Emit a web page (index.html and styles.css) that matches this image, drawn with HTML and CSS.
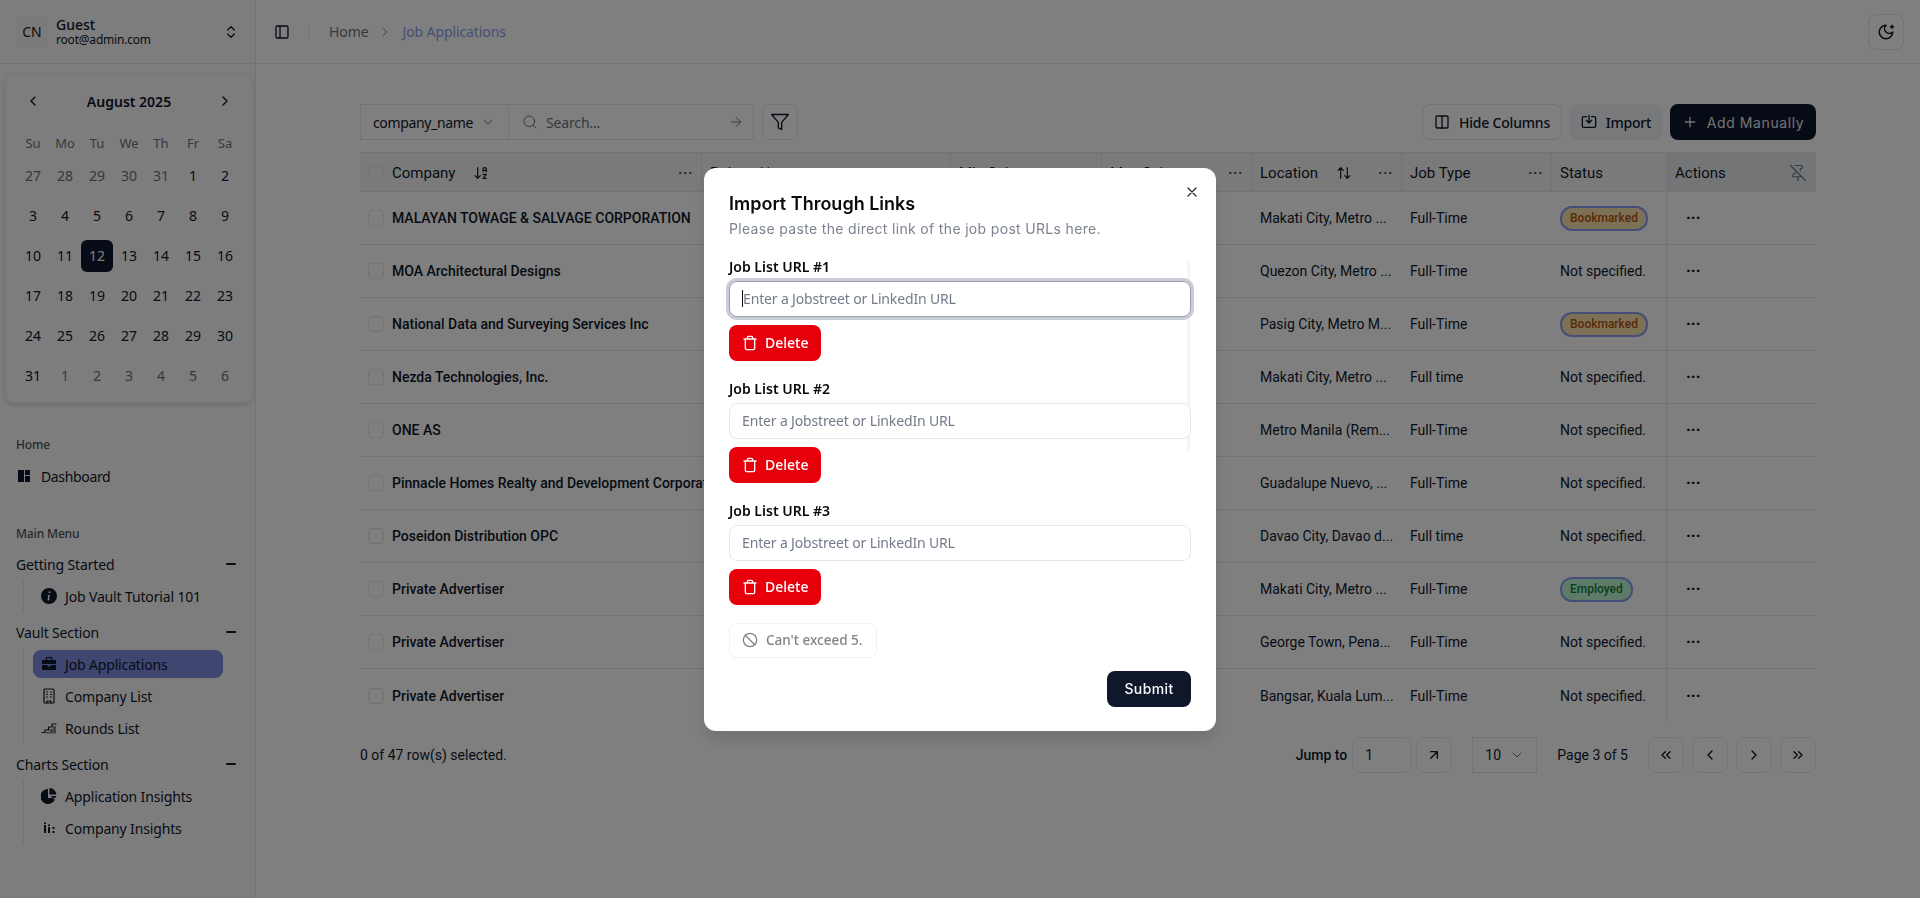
FILE: index.html
```html
<!DOCTYPE html>
<html lang="en">
<head>
    <meta charset="UTF-8">
    <meta name="viewport" content="width=device-width, initial-scale=1.0">
    <title>Job Applications</title>
    <link rel="stylesheet" href="styles.css">
</head>
<body>
    <div class="app">
        <!-- Sidebar -->
        <aside class="sidebar">
            <div class="user-box">
                <div class="avatar">CN</div>
                <div class="user-text">
                    <div class="user-name">Guest</div>
                    <div class="user-mail">root@admin.com</div>
                </div>
                <svg class="ico-16" viewBox="0 0 24 24"><path d="m7 15 5 5 5-5M7 9l5-5 5 5"/></svg>
            </div>

            <div class="calendar">
                <div class="cal-head">
                    <svg class="ico-16" viewBox="0 0 24 24"><path d="m15 18-6-6 6-6"/></svg>
                    <span>August 2025</span>
                    <svg class="ico-16" viewBox="0 0 24 24"><path d="m9 18 6-6-6-6"/></svg>
                </div>
                <div class="cal-grid">
                    <span class="dow">Su</span><span class="dow">Mo</span><span class="dow">Tu</span><span class="dow">We</span><span class="dow">Th</span><span class="dow">Fr</span><span class="dow">Sa</span>
                    <span class="day muted">27</span><span class="day muted">28</span><span class="day muted">29</span><span class="day muted">30</span><span class="day muted">31</span><span class="day">1</span><span class="day">2</span>
                    <span class="day">3</span><span class="day">4</span><span class="day">5</span><span class="day">6</span><span class="day">7</span><span class="day">8</span><span class="day">9</span>
                    <span class="day">10</span><span class="day">11</span><span class="day selected">12</span><span class="day">13</span><span class="day">14</span><span class="day">15</span><span class="day">16</span>
                    <span class="day">17</span><span class="day">18</span><span class="day">19</span><span class="day">20</span><span class="day">21</span><span class="day">22</span><span class="day">23</span>
                    <span class="day">24</span><span class="day">25</span><span class="day">26</span><span class="day">27</span><span class="day">28</span><span class="day">29</span><span class="day">30</span>
                    <span class="day">31</span><span class="day muted">1</span><span class="day muted">2</span><span class="day muted">3</span><span class="day muted">4</span><span class="day muted">5</span><span class="day muted">6</span>
                </div>
            </div>

            <nav class="nav">
                <div class="nav-label">Home</div>
                <a class="nav-top">
                    <svg class="ico-fill" viewBox="0 0 14 14"><path d="M1 1h6v12H1zM8 1h5v5H8zM8 7h5v6H8z"/></svg>
                    Dashboard
                </a>

                <div class="nav-label main-menu">Main Menu</div>

                <div class="nav-group">Getting Started <span class="minus"></span></div>
                <div class="nav-sub">
                    <a class="nav-item">
                        <svg class="ico-fill" viewBox="0 0 16 16"><path fill-rule="evenodd" d="M8 0a8 8 0 1 1 0 16A8 8 0 0 1 8 0zm.6 3.2a1 1 0 1 0 0 2 1 1 0 0 0 0-2zM6.6 6.7l-.1.6.5.1c.3.1.4.2.3.6l-.7 3.1c-.2.9.1 1.3.9 1.3.6 0 1.2-.2 1.5-.6l.1-.6c-.2.2-.6.3-.8.3-.3 0-.4-.2-.3-.5l.9-3.9z"/></svg>
                        Job Vault Tutorial 101
                    </a>
                </div>

                <div class="nav-group">Vault Section <span class="minus"></span></div>
                <div class="nav-sub">
                    <a class="nav-item active">
                        <svg class="ico-fill" viewBox="0 0 16 16"><path d="M5.5 1h5l.8.8V4H15v4H1V4h3.7V1.8zM6 2.3V4h4V2.3zM1 9h5.5v1.5h3V9H15v5H1z"/></svg>
                        Job Applications
                    </a>
                    <a class="nav-item">
                        <svg class="ico-16 thin" viewBox="0 0 16 16"><rect x="3" y="1" width="10" height="14" rx="1"/><path d="M6 13v2M10 13v2M6 13h4M5.5 4h1M9.5 4h1M5.5 6.5h1M9.5 6.5h1M5.5 9h1M9.5 9h1"/></svg>
                        Company List
                    </a>
                    <a class="nav-item">
                        <svg class="ico-16 thin" viewBox="0 0 16 16"><path d="M1 12.5h3V10h3.5V7H11V4h4"/><path class="step-fill" d="M5 13.5h10V6h-3v3H8.5v3H5z"/></svg>
                        Rounds List
                    </a>
                </div>

                <div class="nav-group">Charts Section <span class="minus"></span></div>
                <div class="nav-sub">
                    <a class="nav-item">
                        <svg class="ico-fill" viewBox="0 0 16 16"><path d="M7 1a7.5 7.5 0 1 0 7.3 9H7zM8.5 0v6.5h7A7.5 7.5 0 0 0 8.5 0zM9.5 8h5.8l-2 3.5z"/></svg>
                        Application Insights
                    </a>
                    <a class="nav-item">
                        <svg class="ico-fill" viewBox="0 0 16 16"><path d="M3 5h2v8H3zM3 2.5h2V4H3zM7 7h2v6H7zM7 4.5h2V6H7zM11.5 7h2v2h-2zM11.5 11h2v2h-2z"/></svg>
                        Company Insights
                    </a>
                </div>
            </nav>
        </aside>

        <!-- Main content -->
        <div class="main">
            <header class="topbar">
                <svg class="ico-16 toggle" viewBox="0 0 24 24"><rect x="3" y="3" width="18" height="18" rx="2"/><path d="M9 3v18"/></svg>
                <span class="topbar-sep"></span>
                <span class="crumb">Home</span>
                <svg class="ico-16 crumb-arrow" viewBox="0 0 24 24"><path d="m9 18 6-6-6-6"/></svg>
                <span class="crumb current">Job Applications</span>
                <button class="theme-btn">
                    <svg class="ico-16" viewBox="0 0 24 24"><path d="M12 3a6 6 0 0 0 9 9 9 9 0 1 1-9-9Z"/><path d="M20 3v4M22 5h-4"/></svg>
                </button>
            </header>

            <section class="content">
                <div class="toolbar">
                    <div class="search-group">
                        <div class="column-select">company_name
                            <svg class="ico-16 faint" viewBox="0 0 24 24"><path d="m6 9 6 6 6-6"/></svg>
                        </div>
                        <div class="search-box">
                            <svg class="ico-16 faint" viewBox="0 0 24 24"><circle cx="11" cy="11" r="8"/><path d="m21 21-4.3-4.3"/></svg>
                            <span class="search-text">Search...</span>
                            <svg class="ico-16 faint" viewBox="0 0 24 24"><path d="M5 12h14M12 5l7 7-7 7"/></svg>
                        </div>
                    </div>
                    <button class="btn-outline square">
                        <svg class="ico-16 big" viewBox="0 0 24 24"><path d="M22 3H2l8 9.46V19l4 2v-8.54L22 3z"/></svg>
                    </button>
                    <div class="toolbar-right">
                        <button class="btn-outline">
                            <svg class="ico-16" viewBox="0 0 24 24"><rect x="3" y="3" width="18" height="18" rx="2"/><path d="M12 3v18"/></svg>
                            Hide Columns
                        </button>
                        <button class="btn-soft">
                            <svg class="ico-16" viewBox="0 0 24 24"><path d="M8 4H4a2 2 0 0 0-2 2v12a2 2 0 0 0 2 2h16a2 2 0 0 0 2-2V6a2 2 0 0 0-2-2h-4"/><path d="M12 2v11M8 9.5l4 4 4-4"/></svg>
                            Import
                        </button>
                        <button class="btn-dark">
                            <svg class="ico-16" viewBox="0 0 24 24"><path d="M5 12h14M12 5v14"/></svg>
                            Add Manually
                        </button>
                    </div>
                </div>

                <div class="table">
                    <div class="row head">
                        <div class="cell c1"><span class="check"></span>Company
                            <svg class="ico-16 sort-icon" viewBox="0 0 24 24"><path d="m3 16 4 4 4-4M7 20V4M20 8h-5M15 10V6.5a2.5 2.5 0 0 1 5 0V10M15 14h5l-5 6h5"/></svg>
                            <span class="dots">···</span></div>
                        <div class="cell c2">Role
                            <svg class="ico-16 sort-icon" viewBox="0 0 24 24"><path d="m21 16-4 4-4-4M17 20V4M3 8l4-4 4 4M7 4v16"/></svg>
                            <span class="dots">···</span></div>
                        <div class="cell c3">Min Salary<span class="dots">···</span></div>
                        <div class="cell c4">Max Salary<span class="dots">···</span></div>
                        <div class="cell c5">Location
                            <svg class="ico-16 sort-icon" viewBox="0 0 24 24"><path d="m21 16-4 4-4-4M17 20V4M3 8l4-4 4 4M7 4v16"/></svg>
                            <span class="dots">···</span></div>
                        <div class="cell c6">Job Type<span class="dots">···</span></div>
                        <div class="cell c7">Status</div>
                        <div class="cell c8">Actions
                            <svg class="ico-16 pin" viewBox="0 0 24 24"><path d="M12 17v5M15 9.34V6h1a2 2 0 0 0 0-4H7.89M2 2l20 20M9 9v1.76a2 2 0 0 1-1.11 1.79l-1.78.9A2 2 0 0 0 5 15.24V17h12"/></svg>
                        </div>
                    </div>

                    <div class="row">
                        <div class="cell c1 name"><span class="check"></span>MALAYAN TOWAGE &amp; SALVAGE CORPORATION</div>
                        <div class="cell c2"></div><div class="cell c3"></div><div class="cell c4"></div>
                        <div class="cell c5">Makati City, Metro ...</div>
                        <div class="cell c6">Full-Time</div>
                        <div class="cell c7"><span class="badge amber">Bookmarked</span></div>
                        <div class="cell c8"><span class="more">···</span></div>
                    </div>
                    <div class="row">
                        <div class="cell c1 name"><span class="check"></span>MOA Architectural Designs</div>
                        <div class="cell c2"></div><div class="cell c3"></div><div class="cell c4"></div>
                        <div class="cell c5">Quezon City, Metro ...</div>
                        <div class="cell c6">Full-Time</div>
                        <div class="cell c7">Not specified.</div>
                        <div class="cell c8"><span class="more">···</span></div>
                    </div>
                    <div class="row">
                        <div class="cell c1 name"><span class="check"></span>National Data and Surveying Services Inc</div>
                        <div class="cell c2"></div><div class="cell c3"></div><div class="cell c4"></div>
                        <div class="cell c5">Pasig City, Metro M...</div>
                        <div class="cell c6">Full-Time</div>
                        <div class="cell c7"><span class="badge amber">Bookmarked</span></div>
                        <div class="cell c8"><span class="more">···</span></div>
                    </div>
                    <div class="row">
                        <div class="cell c1 name"><span class="check"></span>Nezda Technologies, Inc.</div>
                        <div class="cell c2"></div><div class="cell c3"></div><div class="cell c4"></div>
                        <div class="cell c5">Makati City, Metro ...</div>
                        <div class="cell c6">Full time</div>
                        <div class="cell c7">Not specified.</div>
                        <div class="cell c8"><span class="more">···</span></div>
                    </div>
                    <div class="row">
                        <div class="cell c1 name"><span class="check"></span>ONE AS</div>
                        <div class="cell c2"></div><div class="cell c3"></div><div class="cell c4"></div>
                        <div class="cell c5">Metro Manila (Rem...</div>
                        <div class="cell c6">Full-Time</div>
                        <div class="cell c7">Not specified.</div>
                        <div class="cell c8"><span class="more">···</span></div>
                    </div>
                    <div class="row">
                        <div class="cell c1 name"><span class="check"></span>Pinnacle Homes Realty and Development Corporation</div>
                        <div class="cell c2"></div><div class="cell c3"></div><div class="cell c4"></div>
                        <div class="cell c5">Guadalupe Nuevo, ...</div>
                        <div class="cell c6">Full-Time</div>
                        <div class="cell c7">Not specified.</div>
                        <div class="cell c8"><span class="more">···</span></div>
                    </div>
                    <div class="row">
                        <div class="cell c1 name"><span class="check"></span>Poseidon Distribution OPC</div>
                        <div class="cell c2"></div><div class="cell c3"></div><div class="cell c4"></div>
                        <div class="cell c5">Davao City, Davao d...</div>
                        <div class="cell c6">Full time</div>
                        <div class="cell c7">Not specified.</div>
                        <div class="cell c8"><span class="more">···</span></div>
                    </div>
                    <div class="row">
                        <div class="cell c1 name"><span class="check"></span>Private Advertiser</div>
                        <div class="cell c2"></div><div class="cell c3"></div><div class="cell c4"></div>
                        <div class="cell c5">Makati City, Metro ...</div>
                        <div class="cell c6">Full-Time</div>
                        <div class="cell c7"><span class="badge green">Employed</span></div>
                        <div class="cell c8"><span class="more">···</span></div>
                    </div>
                    <div class="row">
                        <div class="cell c1 name"><span class="check"></span>Private Advertiser</div>
                        <div class="cell c2"></div><div class="cell c3"></div><div class="cell c4"></div>
                        <div class="cell c5">George Town, Pena...</div>
                        <div class="cell c6">Full-Time</div>
                        <div class="cell c7">Not specified.</div>
                        <div class="cell c8"><span class="more">···</span></div>
                    </div>
                    <div class="row last">
                        <div class="cell c1 name"><span class="check"></span>Private Advertiser</div>
                        <div class="cell c2"></div><div class="cell c3"></div><div class="cell c4"></div>
                        <div class="cell c5">Bangsar, Kuala Lum...</div>
                        <div class="cell c6">Full-Time</div>
                        <div class="cell c7">Not specified.</div>
                        <div class="cell c8"><span class="more">···</span></div>
                    </div>
                </div>

                <div class="table-foot">
                    <span class="selected-count">0 of 47 row(s) selected.</span>
                    <span class="jump-label">Jump to</span>
                    <div class="jump-input">1</div>
                    <button class="page-btn jump-go"><svg class="ico-16" viewBox="0 0 24 24"><path d="M7 7h10v10M7 17 17 7"/></svg></button>
                    <div class="size-select">10 <svg class="ico-16 faint" viewBox="0 0 24 24"><path d="m6 9 6 6 6-6"/></svg></div>
                    <span class="page-text">Page 3 of 5</span>
                    <button class="page-btn"><svg class="ico-16" viewBox="0 0 24 24"><path d="m11 17-5-5 5-5M18 17l-5-5 5-5"/></svg></button>
                    <button class="page-btn"><svg class="ico-16" viewBox="0 0 24 24"><path d="m15 18-6-6 6-6"/></svg></button>
                    <button class="page-btn"><svg class="ico-16" viewBox="0 0 24 24"><path d="m9 18 6-6-6-6"/></svg></button>
                    <button class="page-btn"><svg class="ico-16" viewBox="0 0 24 24"><path d="m6 17 5-5-5-5M13 17l5-5-5-5"/></svg></button>
                </div>
            </section>
        </div>
    </div>

    <!-- Import dialog -->
    <div class="overlay">
        <div class="modal">
            <button class="modal-close"><svg class="ico-16" viewBox="0 0 24 24"><path d="M18 6 6 18M6 6l12 12"/></svg></button>
            <h2 class="modal-title">Import Through Links</h2>
            <p class="modal-sub">Please paste the direct link of the job post URLs here.</p>

            <div class="url-list">
                <div class="url-item">
                    <label class="url-label">Job List URL #1</label>
                    <div class="url-input focused"><span class="caret"></span>Enter a Jobstreet or LinkedIn URL</div>
                    <button class="btn-delete">
                        <svg class="ico-16" viewBox="0 0 24 24"><path d="M3 6h18M19 6v14a2 2 0 0 1-2 2H7a2 2 0 0 1-2-2V6M8 6V4a2 2 0 0 1 2-2h4a2 2 0 0 1 2 2v2"/></svg>
                        Delete
                    </button>
                </div>
                <div class="url-item">
                    <label class="url-label">Job List URL #2</label>
                    <div class="url-input">Enter a Jobstreet or LinkedIn URL</div>
                    <button class="btn-delete">
                        <svg class="ico-16" viewBox="0 0 24 24"><path d="M3 6h18M19 6v14a2 2 0 0 1-2 2H7a2 2 0 0 1-2-2V6M8 6V4a2 2 0 0 1 2-2h4a2 2 0 0 1 2 2v2"/></svg>
                        Delete
                    </button>
                </div>
                <div class="url-item">
                    <label class="url-label">Job List URL #3</label>
                    <div class="url-input">Enter a Jobstreet or LinkedIn URL</div>
                    <button class="btn-delete">
                        <svg class="ico-16" viewBox="0 0 24 24"><path d="M3 6h18M19 6v14a2 2 0 0 1-2 2H7a2 2 0 0 1-2-2V6M8 6V4a2 2 0 0 1 2-2h4a2 2 0 0 1 2 2v2"/></svg>
                        Delete
                    </button>
                </div>
            </div>

            <button class="btn-limit">
                <svg class="ico-16" viewBox="0 0 24 24"><circle cx="12" cy="12" r="10"/><path d="m4.9 4.9 14.2 14.2"/></svg>
                Can't exceed 5.
            </button>

            <div class="modal-foot">
                <button class="btn-submit">Submit</button>
            </div>
        </div>
    </div>
</body>
</html>
```

FILE: styles.css
```css
:root {
    --ink: #0f172a;
    --line: #e5e7eb;
    --ui-font: "Noto Sans", "Open Sans", sans-serif;
    --table-font: Roboto, "Liberation Sans", sans-serif;
    --wide-font: Inter, "Noto Sans", sans-serif;
}

* {
    box-sizing: border-box;
}

body {
    margin: 0;
    height: 898px;
    overflow: hidden;
    background: white;
    color: var(--ink);
    font-family: var(--ui-font);
    font-size: 14px;
}

button {
    font: inherit;
    color: inherit;
    cursor: pointer;
}

.app {
    display: flex;
    height: 898px;
}

/* shared icon styles */
.ico-16 {
    width: 16px;
    height: 16px;
    flex: none;
    fill: none;
    stroke: currentColor;
    stroke-width: 2;
    stroke-linecap: round;
    stroke-linejoin: round;
}

.ico-16.thin {
    stroke-width: 1.2;
}

.ico-16.faint {
    color: #6b7280;
    stroke-width: 1.5;
}

.ico-16.big {
    width: 20px;
    height: 20px;
    stroke-width: 1.6;
}

.ico-fill {
    width: 16px;
    height: 16px;
    flex: none;
    fill: var(--ink);
}

.step-fill {
    fill: #8d8d8d;
    stroke: none;
}

/* Sidebar */
.sidebar {
    width: 256px;
    flex: none;
    background: #fafafa;
    border-right: 1px solid var(--line);
}

.user-box {
    height: 64px;
    display: flex;
    align-items: center;
    padding: 0 16px;
    border-bottom: 1px solid var(--line);
}

.avatar {
    width: 32px;
    height: 32px;
    border-radius: 8px;
    background: #f4f4f5;
    display: flex;
    align-items: center;
    justify-content: center;
    font-size: 14px;
    margin-right: 8px;
}

.user-text {
    flex: 1;
    line-height: 15px;
}

.user-name {
    font-size: 14px;
    font-weight: 500;
}

.user-mail {
    font-size: 12px;
    letter-spacing: -0.2px;
}

.calendar {
    width: 248px;
    height: 330px;
    margin: 9px 0 0 5px;
    padding: 11px 11px 0;
    background: #fafafa;
    border: 1px solid #eee;
    border-radius: 8px;
    box-shadow: 0 2px 4px rgba(0,0,0,0.12);
}

.cal-head {
    display: flex;
    align-items: center;
    justify-content: space-between;
    height: 32px;
    padding: 0 8px;
    font-weight: 600;
    font-size: 14px;
}

.cal-grid {
    display: grid;
    grid-template-columns: repeat(7, 32px);
    grid-template-rows: 19px repeat(6, 32px);
    row-gap: 8px;
    margin-top: 16px;
}

.dow {
    display: flex;
    align-items: center;
    justify-content: center;
    font-size: 13px;
    color: #71717a;
}

.day {
    display: flex;
    align-items: center;
    justify-content: center;
    padding-bottom: 1px;
    font-size: 14px;
    border-radius: 6px;
}

.day.muted {
    color: #71717a;
}

.day.selected {
    background: var(--ink);
    color: #f8fafc;
}

.nav {
    padding: 0 16px;
    margin-top: 34px;
    letter-spacing: -0.15px;
}

.nav-label {
    font-size: 12px;
    font-weight: 500;
    line-height: 16px;
    color: #52525b;
}

.nav-label.main-menu {
    margin-top: 34px;
}

.nav-top {
    display: flex;
    align-items: center;
    gap: 10px;
    height: 32px;
    margin-top: 7px;
    font-size: 14px;
    letter-spacing: -0.35px;
}

.nav-top .ico-fill {
    width: 14px;
    height: 14px;
    margin-left: 1px;
}

.nav-group {
    display: flex;
    align-items: center;
    justify-content: space-between;
    height: 32px;
    font-size: 14px;
}

.main-menu + .nav-group {
    margin-top: 6px;
}

.minus {
    width: 10px;
    height: 2px;
    background: var(--ink);
    margin-right: 3px;
    border-radius: 1px;
}

.nav-sub {
    margin-left: 7px;
    padding: 0 0 0 9px;
    border-left: 1px solid #e4e4e7;
    width: 191px;
    margin-bottom: 4px;
}

.nav-item {
    display: flex;
    align-items: center;
    gap: 8px;
    height: 32px;
    width: 190px;
    padding-left: 8px;
    border-radius: 8px;
    font-size: 14px;
}

.nav-item.active {
    height: 28px;
    margin: 2px 0;
    background: #7e8ce0;
}

/* Top bar */
.main {
    flex: 1;
    min-width: 0;
}

.topbar {
    height: 64px;
    display: flex;
    align-items: center;
    padding: 0 16px 0 18px;
    border-bottom: 1px solid var(--line);
}

.toggle {
    margin-right: 18px;
}

.topbar-sep {
    width: 1px;
    height: 16px;
    background: var(--line);
    margin-right: 20px;
}

.crumb {
    color: #71717a;
    font-size: 14px;
    letter-spacing: -0.1px;
}

.crumb.current {
    color: #8b9cf0;
}

.crumb-arrow {
    color: #71717a;
    margin: 0 10px;
    stroke-width: 1.5;
    width: 14px;
    height: 14px;
}

.theme-btn {
    margin-left: auto;
    width: 36px;
    height: 36px;
    border: 1px solid var(--line);
    border-radius: 8px;
    background: white;
    display: flex;
    align-items: center;
    justify-content: center;
    padding: 0;
}

.theme-btn .ico-16 {
    width: 18px;
    height: 18px;
}

/* Table area */
.content {
    padding: 40px 104px 0;
}

.toolbar {
    display: flex;
    align-items: center;
    height: 36px;
    gap: 8px;
}

.search-group {
    display: flex;
    width: 394px;
    height: 36px;
    border: 1px solid var(--line);
}

.column-select {
    width: 148px;
    display: flex;
    align-items: center;
    justify-content: space-between;
    padding: 0 12px;
    border-right: 1px solid var(--line);
    font-size: 14px;
    letter-spacing: -0.35px;
}

.search-box {
    flex: 1;
    display: flex;
    align-items: center;
    gap: 8px;
    padding: 0 9px 0 13px;
    color: #6b7280;
    letter-spacing: -0.15px;
}

.search-text {
    flex: 1;
}

.toolbar-right {
    margin-left: auto;
    display: flex;
    gap: 8px;
}

.btn-outline, .btn-soft, .btn-dark {
    height: 36px;
    border-radius: 8px;
    display: flex;
    align-items: center;
    justify-content: center;
    gap: 9px;
    padding: 0;
    font-size: 14px;
    font-weight: 500;
    letter-spacing: -0.2px;
    white-space: nowrap;
}

.btn-outline {
    width: 140px;
    background: white;
    border: 1px solid var(--line);
}

.btn-outline.square {
    width: 36px;
}

.btn-soft {
    width: 92px;
    background: #f1f2f4;
    border: 0;
}

.btn-dark {
    width: 146px;
    background: var(--ink);
    color: #e2e5ea;
    border: 0;
    font-family: var(--wide-font);
    font-weight: 400;
    letter-spacing: 0.6px;
}

.table {
    margin-top: 12px;
    font-family: var(--table-font);
}

.row {
    display: flex;
    height: 53px;
    border-bottom: 1px solid var(--line);
}

.row.head {
    height: 40px;
    background: #f5f5f5;
    border-top: 1px solid var(--line);
}

.row.last {
    border-bottom: 0;
}

.cell {
    display: flex;
    align-items: center;
    padding-left: 8px;
    font-size: 14px;
    white-space: nowrap;
}

.head .cell {
    font-size: 15px;
    padding-top: 1px;
    border-right: 1px solid var(--line);
    padding-right: 8px;
}

.head .cell:last-child {
    border-right: 0;
}

.c1 { width: 342px; }
.c2 { width: 249px; }
.c3 { width: 151px; }
.c4 { width: 150px; }
.c5 { width: 150px; }
.c6 { width: 150px; }
.c7 { width: 114px; }
.c8 { width: 150px; border-left: 1px solid var(--line); }

.head .c7 { border-right: 0; }
.head .c8 { background: #e9ebef; }

.name {
    font-weight: 500;
}

.check {
    width: 16px;
    height: 16px;
    border: 1px solid var(--line);
    border-radius: 4px;
    margin-right: 8px;
    flex: none;
}

.sort-icon {
    margin-left: 18px;
    stroke-width: 1.8;
}

.dots {
    margin-left: auto;
    font-weight: 700;
    color: #52525b;
    letter-spacing: 0.5px;
}

.pin {
    margin-left: auto;
    color: #6b7280;
    margin-right: 1px;
    stroke-width: 1.5;
    width: 18px;
    height: 18px;
}

.more {
    font-weight: 900;
    margin-left: 11px;
    font-size: 15px;
}

.badge {
    display: inline-block;
    padding: 0 8px;
    line-height: 21px;
    font-size: 12px;
    font-weight: 500;
    border-radius: 12px;
    border: 2px solid #8b9cf0;
}

.badge.amber {
    background: #f9e3ae;
    color: #b45309;
}

.badge.green {
    background: #bbf7d0;
    color: #15803d;
}

.table-foot {
    display: flex;
    align-items: center;
    height: 36px;
    margin-top: 15px;
    font-family: var(--table-font);
    font-size: 14px;
}

.selected-count {
    margin-right: auto;
}

.jump-label {
    font-weight: 500;
    margin-right: 5px;
}

.jump-input {
    width: 60px;
    height: 36px;
    border: 1px solid var(--line);
    border-radius: 8px;
    padding-left: 12px;
    line-height: 34px;
    margin-right: 4px;
}

.page-btn {
    width: 36px;
    height: 36px;
    padding: 0;
    margin-left: 8px;
    border: 1px solid var(--line);
    border-radius: 8px;
    background: white;
    display: flex;
    align-items: center;
    justify-content: center;
}

.page-btn.jump-go {
    margin-left: 0;
}

.size-select {
    width: 65px;
    height: 36px;
    margin-left: 20px;
    border: 1px solid var(--line);
    display: flex;
    align-items: center;
    gap: 8px;
    padding-left: 12px;
}

.page-text {
    margin: 0 12px 0 20px;
}

/* Dialog */
.overlay {
    position: fixed;
    inset: 0;
    background: rgba(0,0,0,0.5);
    display: flex;
    align-items: center;
    justify-content: center;
}

.modal {
    position: relative;
    width: 512px;
    height: 563px;
    padding: 24px 25px;
    background: white;
    border-radius: 12px;
    box-shadow: 0 10px 15px rgba(0,0,0,0.1);
}

.modal-close {
    position: absolute;
    top: 16px;
    right: 16px;
    padding: 0;
    background: none;
    border: 0;
    display: flex;
    color: #333;
}

.modal-title {
    margin: 0;
    font-family: var(--wide-font);
    font-size: 18px;
    font-weight: 600;
    line-height: 24px;
    color: #0a0a0a;
}

.modal-sub {
    margin: 3px 0 0;
    font-family: var(--wide-font);
    font-size: 14px;
    line-height: 20px;
    letter-spacing: 0.33px;
    color: #7c8390;
}

.url-list {
    position: relative;
    margin-top: 18px;
}

/* scrollbar track */
.url-list::after {
    content: "";
    position: absolute;
    top: 5px;
    right: 1px;
    width: 3px;
    height: 190px;
    background: #f6f6f7;
}

.url-item {
    position: relative;
    z-index: 1;
    margin-bottom: 18px;
}

.url-label {
    display: block;
    font-size: 14px;
    font-weight: 600;
    line-height: 20px;
    margin-bottom: 4px;
    color: #0a0a0a;
}

.url-input {
    height: 36px;
    border: 1px solid var(--line);
    border-radius: 8px;
    padding-left: 12px;
    line-height: 34px;
    font-size: 14px;
    letter-spacing: -0.15px;
    color: #737b8a;
    background: white;
}

.url-input.focused {
    border-color: #9ca3af;
    box-shadow: 0 0 0 3px #c9ced6;
}

.caret {
    display: inline-block;
    width: 1px;
    height: 17px;
    background: #111;
    vertical-align: -3px;
}

.btn-delete {
    height: 36px;
    width: 92px;
    margin-top: 8px;
    border: 0;
    border-radius: 8px;
    background: #e7000b;
    color: white;
    font-weight: 500;
    font-size: 14px;
    display: flex;
    align-items: center;
    gap: 7px;
    padding: 0 13px;
}

.btn-limit {
    height: 35px;
    width: 148px;
    border: 1px solid #f1f1f2;
    border-radius: 8px;
    background: white;
    color: #80838a;
    display: flex;
    align-items: center;
    gap: 8px;
    padding: 0 12px;
    font-size: 13.5px;
    font-weight: 500;
    white-space: nowrap;
}

.modal-foot {
    display: flex;
    justify-content: flex-end;
    margin-top: 13px;
}

.btn-submit {
    height: 36px;
    width: 84px;
    border: 0;
    border-radius: 8px;
    background: var(--ink);
    color: #f8fafc;
    font-family: var(--wide-font);
    font-size: 14px;
    font-weight: 500;
    letter-spacing: 0.4px;
}
```
